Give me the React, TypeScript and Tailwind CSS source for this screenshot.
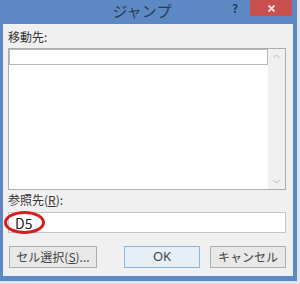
export default function App() {
  const jp = { fontFamily: '"Noto Sans CJK JP", "Noto Sans", sans-serif' };
  return (
    <div className="w-[300px] h-[284px] bg-[#dfe5ec] overflow-hidden" style={jp}>
      <div className="w-[297px] h-[281px] bg-[#5c89c4] flex flex-col">
        {/* title bar */}
        <div className="h-[24px] flex items-start shrink-0">
          <div className="flex-1 h-[22px] flex items-center justify-center pl-[66px] text-[15px] text-[#2a3b55]">
            ジャンプ
          </div>
          <div className="w-[26px] h-[16px] flex items-center justify-center text-[11px] font-bold text-[#1f3557] ml-[4px]">
            ?
          </div>
          <div className="w-[42px] h-[16px] mr-[5px] ml-[2px] bg-[#c9504e] flex items-center justify-center">
            <svg width="9" height="9" viewBox="0 0 9 9">
              <path d="M1.5 1.5 L7.5 7.5 M7.5 1.5 L1.5 7.5" stroke="#f4dede" strokeWidth="1.8" />
            </svg>
          </div>
        </div>
        {/* panel */}
        <div className="flex-1 ml-[3px] mr-[4px] mb-[5px] bg-[#f0f0f0] flex flex-col px-[5px] text-[12px] text-[#333]">
          <div className="h-[24px] pt-[6px] leading-[14px]">移動先:</div>
          <div className="h-[142px] w-[278px] border border-[#acacac] bg-white flex">
            <div className="flex-1 flex flex-col">
              <div className="h-[16px] border border-[#b9b9b9]"></div>
            </div>
            <div className="w-[17px] bg-[#f0f0f0] flex flex-col items-center justify-between py-[5px]">
              <svg width="7" height="5" viewBox="0 0 7 5">
                <path d="M0.5 4 L3.5 1 L6.5 4" stroke="#b8b8b8" fill="none" strokeWidth="1" />
              </svg>
              <svg width="7" height="5" viewBox="0 0 7 5">
                <path d="M0.5 1 L3.5 4 L6.5 1" stroke="#b8b8b8" fill="none" strokeWidth="1" />
              </svg>
            </div>
          </div>
          <div className="h-[22px] pt-[3px] leading-[14px]">
            参照先(<span className="underline">R</span>):
          </div>
          <div className="relative h-[21px] w-[278px] border border-[#c5c5c5] bg-white flex items-center pl-[6px] text-[14px] leading-none text-[#222]">
            D5
            <div className="absolute left-[-5px] top-[-2px] w-[41px] h-[23px] rounded-[50%] border-[3px] border-[#d81c1c]"></div>
          </div>
          <div className="flex mt-[13px] h-[22px] text-[12px] text-[#444]">
            <div className="w-[88px] ml-[1px] border border-[#adadad] bg-[#e8e8e8] flex items-center justify-center">
              セル選択(<span className="underline">S</span>)...
            </div>
            <div className="w-[76px] ml-[27px] border border-[#86b6e6] bg-[#e6eef6] flex items-center justify-center text-[13px]" style={{ fontFamily: '"Noto Sans", sans-serif' }}>
              OK
            </div>
            <div className="w-[76px] ml-[10px] border border-[#adadad] bg-[#e8e8e8] flex items-center justify-center">
              キャンセル
            </div>
          </div>
        </div>
      </div>
    </div>
  );
}
